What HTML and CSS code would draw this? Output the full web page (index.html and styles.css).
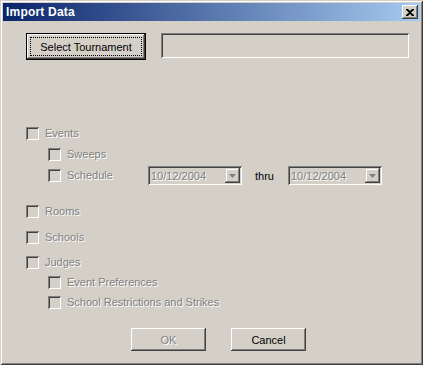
FILE: index.html
```html
<!DOCTYPE html>
<html>
<head>
<meta charset="utf-8">
<link rel="stylesheet" href="styles.css">
</head>
<body>
<div class="window">
  <div class="titlebar">
    <span class="title">Import Data</span>
    <span class="close"><svg width="8" height="7" viewBox="0 0 8 7"><path d="M0 0h2l2 2 2-2h2v1l-3 2.5 3 2.5v1h-2l-2-2-2 2h-2v-1l3-2.5-3-2.5z" fill="#000"/></svg></span>
  </div>
  <div class="content">
    <div class="toprow">
      <div class="btn default"><span class="focus">Select Tournament</span></div>
      <div class="field"></div>
    </div>

    <div class="row r-events"><span class="cb"></span><span class="lbl dis">Events</span></div>
    <div class="row sub r-sweeps"><span class="cb"></span><span class="lbl dis">Sweeps</span></div>
    <div class="row sub r-sched">
      <span class="cb"></span><span class="lbl dis wide">Schedule</span>
      <div class="combo"><span class="val dis">10/12/2004</span><span class="arrow"><svg width="7" height="4" viewBox="0 0 7 4"><path d="M0 0h7l-3.5 4z" fill="#808080"/></svg></span></div>
      <span class="thru">thru</span>
      <div class="combo"><span class="val dis">10/12/2004</span><span class="arrow"><svg width="7" height="4" viewBox="0 0 7 4"><path d="M0 0h7l-3.5 4z" fill="#808080"/></svg></span></div>
    </div>
    <div class="row r-rooms"><span class="cb"></span><span class="lbl dis">Rooms</span></div>
    <div class="row r-schools"><span class="cb"></span><span class="lbl dis">Schools</span></div>
    <div class="row r-judges"><span class="cb"></span><span class="lbl dis">Judges</span></div>
    <div class="row sub r-pref"><span class="cb"></span><span class="lbl dis">Event Preferences</span></div>
    <div class="row sub r-restr"><span class="cb"></span><span class="lbl dis">School Restrictions and Strikes</span></div>

    <div class="buttons">
      <div class="btn small"><span class="dis">OK</span></div>
      <div class="btn small">Cancel</div>
    </div>
  </div>
</div>
</body>
</html>
```
FILE: styles.css
```css
html, body {
  margin: 0;
  padding: 0;
  background: #D4D0C8;
}
body {
  font-family: "Liberation Sans", Arial, sans-serif;
  font-size: 11px;
  color: #000;
}
.window {
  width: 423px;
  height: 365px;
  box-sizing: border-box;
  padding: 3px;
  background: #D4D0C8;
  box-shadow: inset 1px 1px 0 #D4D0C8, inset -1px -1px 0 #404040,
              inset 2px 2px 0 #FFFFFF, inset -2px -2px 0 #808080;
}
.titlebar {
  height: 18px;
  display: flex;
  align-items: center;
  justify-content: space-between;
  background: linear-gradient(to right, #0A246A, #A6CAF0);
  padding: 0 2px 0 3px;
}
.title {
  color: #fff;
  font-weight: bold;
  font-size: 12px;
  letter-spacing: 0.2px;
}
.close {
  width: 16px;
  height: 14px;
  box-sizing: border-box;
  background: #D4D0C8;
  display: flex;
  align-items: center;
  justify-content: center;
  box-shadow: inset -1px -1px 0 #404040, inset 1px 1px 0 #FFFFFF,
              inset -2px -2px 0 #808080;
}
.content {
  padding-left: 23px;
}
.toprow {
  display: flex;
  align-items: flex-start;
  margin-top: 12px;
}
.btn {
  box-sizing: border-box;
  display: flex;
  align-items: center;
  justify-content: center;
  background: #D4D0C8;
  box-shadow: inset -1px -1px 0 #404040, inset 1px 1px 0 #FFFFFF,
              inset -2px -2px 0 #808080, inset 2px 2px 0 #D4D0C8;
}
.btn.default {
  width: 120px;
  height: 27px;
  border: 1px solid #000;
  padding: 3px;
}
.focus {
  flex: 1;
  align-self: stretch;
  display: flex;
  align-items: center;
  justify-content: center;
  border: 1px dotted #000;
}
.field {
  margin-left: 15px;
  width: 248px;
  height: 25px;
  box-sizing: border-box;
  background: #D4D0C8;
  box-shadow: inset 1px 1px 0 #808080, inset -1px -1px 0 #FFFFFF,
              inset 2px 2px 0 #404040, inset -2px -2px 0 #D4D0C8;
}
.row {
  display: flex;
  align-items: center;
}
.row.sub {
  padding-left: 22px;
}
.cb {
  width: 13px;
  height: 13px;
  box-sizing: border-box;
  flex: none;
  background: #D4D0C8;
  box-shadow: inset 1px 1px 0 #808080, inset -1px -1px 0 #FFFFFF,
              inset 2px 2px 0 #404040, inset -2px -2px 0 #D4D0C8;
}
.lbl {
  margin-left: 6px;
  line-height: 13px;
}
.lbl.wide {
  width: 81px;
}
.dis {
  color: #808080;
  text-shadow: 1px 1px 0 #FFFFFF;
}
.r-events { margin-top: 67px; }
.r-sweeps { margin-top: 8px; }
.r-sched { margin-top: 5px; height: 19px; }
.r-rooms { margin-top: 20px; }
.r-schools { margin-top: 13px; }
.r-judges { margin-top: 12px; }
.r-pref { margin-top: 7px; }
.r-restr { margin-top: 7px; }
.combo {
  width: 94px;
  height: 19px;
  box-sizing: border-box;
  padding: 2px;
  display: flex;
  align-items: stretch;
  background: #D4D0C8;
  box-shadow: inset 1px 1px 0 #808080, inset -1px -1px 0 #FFFFFF,
              inset 2px 2px 0 #404040, inset -2px -2px 0 #D4D0C8;
}
.val {
  flex: 1;
  padding-left: 1px;
  display: flex;
  align-items: center;
}
.arrow {
  width: 15px;
  box-sizing: border-box;
  display: flex;
  align-items: center;
  justify-content: center;
  background: #D4D0C8;
  box-shadow: inset -1px -1px 0 #404040, inset 1px 1px 0 #D4D0C8,
              inset -2px -2px 0 #808080, inset 2px 2px 0 #FFFFFF;
}
.thru {
  margin-left: 13px;
  margin-right: 14px;
}
.buttons {
  display: flex;
  gap: 25px;
  margin-top: 19px;
  padding-left: 105px;
}
.btn.small {
  width: 75px;
  height: 23px;
}
```
